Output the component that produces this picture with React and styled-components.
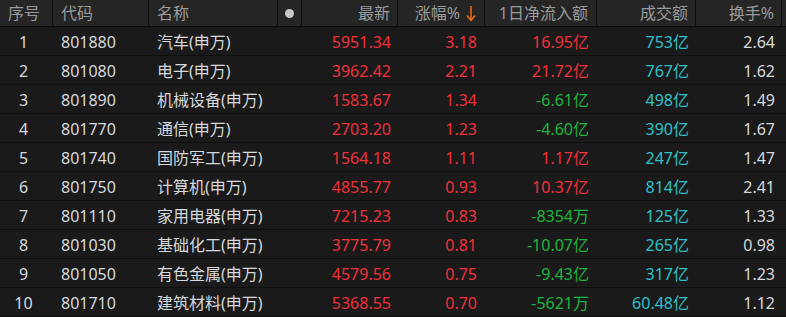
import React from "react";
import styled, { createGlobalStyle } from "styled-components";

const Global = createGlobalStyle`
  html, body { margin: 0; padding: 0; background: #1a1a1a; }
  body { font-family: "Noto Sans", "Noto Sans CJK SC", sans-serif; }
`;

const COLS = "53px 96px 129px 24px 96px 87px 112px 99px 86px 4px";

const Table = styled.div`
  width: 786px;
  height: 317px;
  overflow: hidden;
  background: #1a1a1a;
  font-size: 16px;
`;

const HeaderRow = styled.div`
  display: grid;
  grid-template-columns: ${COLS};
  height: 26px;
  background: #252525;
  border-bottom: 1px solid #0c0c0c;
`;

const HeadCell = styled.div`
  display: flex;
  align-items: center;
  justify-content: ${(p) => (p.$align === "right" ? "flex-end" : p.$align === "center" ? "center" : "flex-start")};
  padding: 0 ${(p) => p.$pr ?? 7}px 0 8px;
  color: #9b9b9b;
  border-right: ${(p) => (p.$noBorder ? "none" : "1px solid #0e0e0e")};
  white-space: nowrap;
  line-height: 1;
`;

const Dot = styled.span`
  width: 9px;
  height: 9px;
  border-radius: 50%;
  background: #c8c8c8;
`;

const Row = styled.div`
  display: grid;
  grid-template-columns: ${COLS};
  height: 28px;
  border-bottom: 1px solid #0e0e0e;
  background: #1a1a1a;
`;

const Cell = styled.div`
  display: flex;
  align-items: center;
  justify-content: ${(p) => (p.$align === "right" ? "flex-end" : p.$align === "center" ? "center" : "flex-start")};
  padding: ${(p) => (p.$align === "center" ? "0 6px 0 0" : p.$align === "right" ? `0 ${p.$pr ?? 7}px 0 0` : "0 0 0 8px")};
  color: ${(p) => p.$color || "#d6d8dc"};
  white-space: nowrap;
  line-height: 1;
  padding-top: 2px;
`;

const RED = "#f0303a";
const GREEN = "#1fb43f";
const CYAN = "#30c0c8";

const Arrow = () => (
  <svg width="10" height="17" viewBox="0 0 10 17" style={{ marginLeft: 6 }}>
    <path d="M5 1 V15 M1 10.5 L5 15.5 L9 10.5" stroke="#e8680f" strokeWidth="1.6" fill="none" />
  </svg>
);

const data = [
  ["1", "801880", "汽车(申万)", "5951.34", "3.18", "16.95亿", "753亿", "2.64"],
  ["2", "801080", "电子(申万)", "3962.42", "2.21", "21.72亿", "767亿", "1.62"],
  ["3", "801890", "机械设备(申万)", "1583.67", "1.34", "-6.61亿", "498亿", "1.49"],
  ["4", "801770", "通信(申万)", "2703.20", "1.23", "-4.60亿", "390亿", "1.67"],
  ["5", "801740", "国防军工(申万)", "1564.18", "1.11", "1.17亿", "247亿", "1.47"],
  ["6", "801750", "计算机(申万)", "4855.77", "0.93", "10.37亿", "814亿", "2.41"],
  ["7", "801110", "家用电器(申万)", "7215.23", "0.83", "-8354万", "125亿", "1.33"],
  ["8", "801030", "基础化工(申万)", "3775.79", "0.81", "-10.07亿", "265亿", "0.98"],
  ["9", "801050", "有色金属(申万)", "4579.56", "0.75", "-9.43亿", "317亿", "1.23"],
  ["10", "801710", "建筑材料(申万)", "5368.55", "0.70", "-5621万", "60.48亿", "1.12"],
];

export default function App() {
  return (
    <>
      <Global />
      <Table>
        <HeaderRow>
          <HeadCell>序号</HeadCell>
          <HeadCell>代码</HeadCell>
          <HeadCell>名称</HeadCell>
          <HeadCell $align="center" style={{ padding: 0 }}><Dot /></HeadCell>
          <HeadCell $align="right">最新</HeadCell>
          <HeadCell $align="right" $pr={8}>涨幅%<Arrow /></HeadCell>
          <HeadCell $align="right" $pr={8}>1日净流入额</HeadCell>
          <HeadCell $align="right">成交额</HeadCell>
          <HeadCell $align="right">换手%</HeadCell>
          <HeadCell $noBorder />
        </HeaderRow>
        {data.map((r) => (
          <Row key={r[0]}>
            <Cell $align="center">{r[0]}</Cell>
            <Cell>{r[1]}</Cell>
            <Cell>{r[2]}</Cell>
            <Cell />
            <Cell $align="right" $color={RED}>{r[3]}</Cell>
            <Cell $align="right" $pr={8} $color={RED}>{r[4]}</Cell>
            <Cell $align="right" $pr={8} $color={r[5].startsWith("-") ? GREEN : RED}>{r[5]}</Cell>
            <Cell $align="right" $color={CYAN}>{r[6]}</Cell>
            <Cell $align="right">{r[7]}</Cell>
            <Cell />
          </Row>
        ))}
      </Table>
    </>
  );
}
